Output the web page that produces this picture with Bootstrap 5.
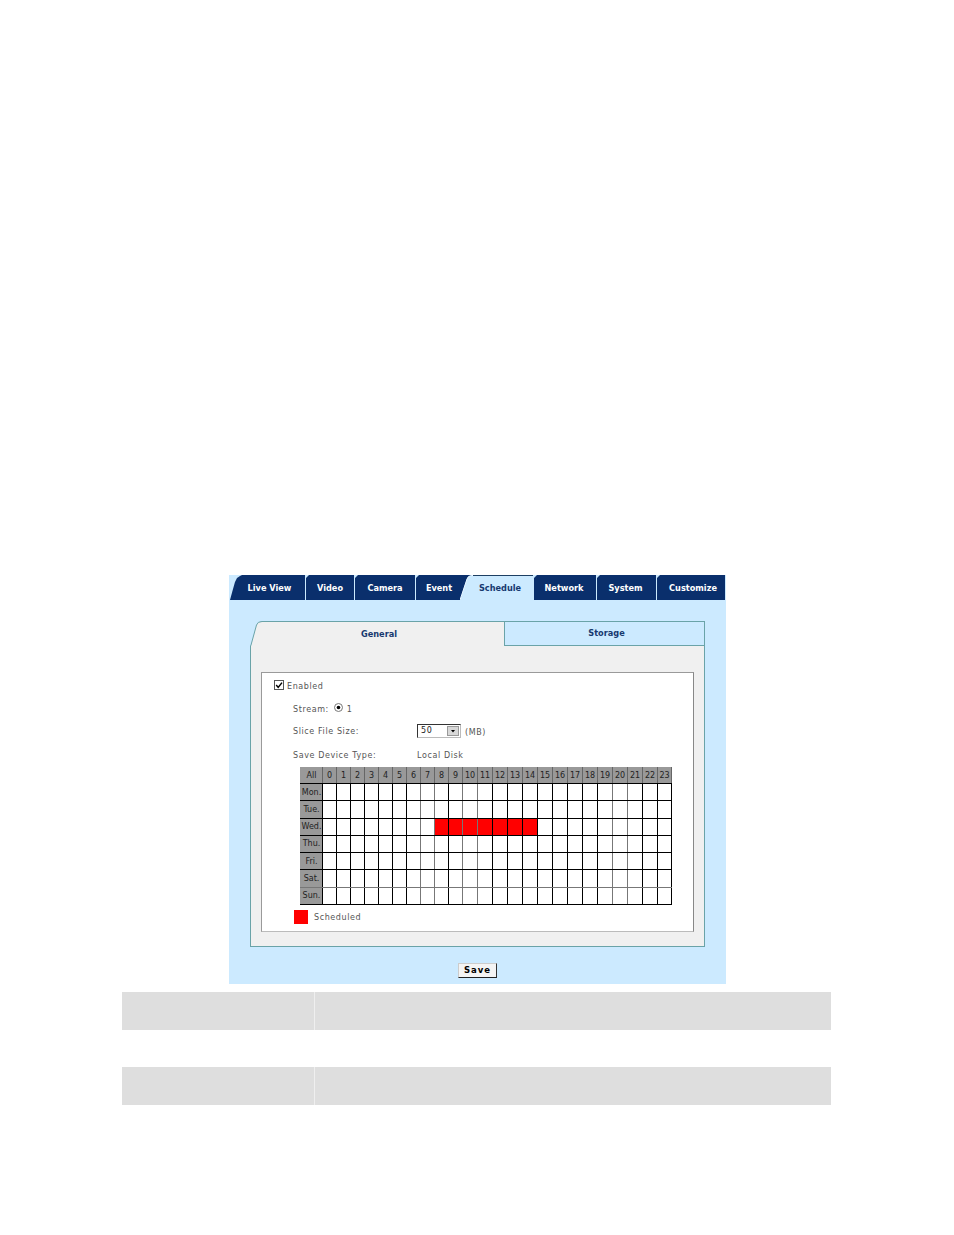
<!DOCTYPE html>
<html lang="en">
<head>
<meta charset="utf-8">
<title>Schedule</title>
<link rel="stylesheet" href="https://cdn.jsdelivr.net/npm/bootstrap@5.3.0/dist/css/bootstrap.min.css">
<style>
body{background:#fff;font-family:"DejaVu Sans",Verdana,sans-serif;font-size:8px;color:#555;}
.page-wrap{padding-top:575px;}
.shot{width:497px;margin-left:229px;background:#cceaff;padding-bottom:6px;}
.top-tabs{height:25px;padding-left:1px;gap:1px;background:#cceaff;}
.top-tab{position:relative;height:25px;padding-top:1px;background:#0a2f6c;color:#fff;font-weight:700;font-size:8.2px;clip-path:polygon(3px 0,100% 0,100% 100%,0 100%,0 3px);}
.top-tab.first{clip-path:polygon(12px 0,10px 1px,7px 3px,5px 7px,3px 14px,0 25px,100% 100%,100% 0);}
.top-tab.current{background:#cceaff;color:#17396f;clip-path:none;overflow:visible;border-top:1px solid #1d3f63;padding-top:0;}
.nudge-l{padding-right:2px;}
.slope{position:absolute;left:0;top:-1px;}
.slope-tab{left:-3px;}
.inner{margin:21px 21px 0;width:455px;}
.in-tabs{height:25px;}
.in-tab{position:relative;height:25px;font-weight:700;font-size:8.2px;color:#17396f;}
.in-tab.on{width:254px;background:#f0f0f0;border-top:1px solid #6aa3a8;}
.in-tab.off{width:201px;background:#cceaff;border:1px solid #6aa3a8;}
.in-body{background:#f0f0f0;border:1px solid #6aa3a8;border-top:0;padding:26px 10px 15px;height:301px;}
.form-box{background:#fff;border:1px solid #9a9a9a;border-bottom-color:#bbb;border-right-color:#888;height:260px;padding-top:5px;letter-spacing:.6px;}
.line{height:14px;margin-left:31px;}
.gap-a{margin-top:9px;}
.gap-b{margin-top:10px;}
.lbl{width:124px;}
.drop1{padding-top:2px;}
.drop2{padding-top:4px;}
.chk-row{margin-left:12px;height:14px;}
.chk{width:10px;height:10px;margin-right:3px;display:block;}
.radio-ic{display:block;width:9px;height:9px;margin:-2px 4px 0 5px;}
.fake-select{width:44px;height:14px;border:1px solid #333;border-right-color:#bbb;border-bottom-color:#bbb;color:#222;padding-left:3px;margin-right:4px;background:#fff;}
.sel-btn{width:12px;height:10px;background:#d8d8d8;border:1px solid #999;margin-right:1px;}
.sched{table-layout:fixed;width:371px;height:138px;margin:5px 0 0 38px;border-collapse:collapse;letter-spacing:0;color:#222;}
.sched th{background:#999;font-weight:400;text-align:center;padding:0;border:1px solid #222;font-size:8px;line-height:1;}
.sched thead th{border-top-color:#999;border-left-color:#666;border-right-color:#666;border-bottom-color:#000;height:16px;width:15px;}
.sched thead th:nth-child(-n+11),.sched thead th:last-child{width:14px;}
.sched thead th:first-child{border-left-color:#999;width:22px;}
.sched tbody th{border-color:#999 #000 #000 #999;padding-top:1px;}
.sched tbody tr:nth-child(6) th{border-bottom-color:#777;}
.sched td{padding:0;border:1px solid #000;background:#fff;}
.sched tr:nth-child(6) td{border-bottom-color:#777;}
.sched td:nth-child(8),.sched td:nth-child(9),.sched td:nth-child(11),.sched td:nth-child(12),.sched td:nth-child(21),.sched td:nth-child(22){border-right-color:#777;}
.sched td.hit{background:#f00;}
.legend{margin:5px 0 0 32px;height:14px;}
.swatch{width:14px;height:14px;background:#f00;margin-right:6px;}
.save-btn{width:39px;height:15px;padding:0;font-size:8.5px;line-height:1;font-weight:700;letter-spacing:1px;color:#000;background:#f4f4f4;border:1px solid;border-color:#ccc #333 #222 #ccc;border-radius:0;}
.save-row{margin-top:16px;}
.blank{width:709px;margin:8px 0 0 122px;border-collapse:collapse;table-layout:fixed;}
.blank td{height:38px;padding:0;}
.blank .gap-row td{height:37px;}
.blank .fill td{background:#dedede;}
.blank .fill td:first-child{width:192px;border-right:1px solid #efefef;}
</style>
</head>
<body class="m-0">
<div class="page-wrap">
<div class="shot">
  <nav class="top-tabs d-flex">
    <div class="top-tab first d-flex align-items-center justify-content-center ps-1" style="width:75px">Live View</div>
    <div class="top-tab d-flex align-items-center justify-content-center" style="width:48px">Video</div>
    <div class="top-tab d-flex align-items-center justify-content-center" style="width:60px">Camera</div>
    <div class="top-tab d-flex align-items-center justify-content-center" style="width:46px">Event</div>
    <div class="top-tab current d-flex align-items-center justify-content-center ps-1" style="width:70px">
      <svg class="slope slope-tab" width="13" height="25" viewBox="0 0 13 25"><path d="M0 25 L7 4 Q8 .5 12 .5 L13 0 L0 0Z" fill="#0a2f6c"/><path d="M0 25 L7 4 Q8 .5 12 .5 L13 1 L13 25Z" fill="#cceaff"/><path d="M0 25 L7 4 Q8 .5 12 .5 L13 .5" fill="none" stroke="#e4f4ff"/></svg>
      Schedule</div>
    <div class="top-tab nudge-l d-flex align-items-center justify-content-center" style="width:62px">Network</div>
    <div class="top-tab nudge-l d-flex align-items-center justify-content-center" style="width:59px">System</div>
    <div class="top-tab d-flex align-items-center justify-content-center ps-1" style="width:68px">Customize</div>
  </nav>
  <div class="inner">
    <div class="in-tabs d-flex">
      <div class="in-tab on d-flex align-items-center justify-content-center ps-1">
        <svg class="slope" width="13" height="25" viewBox="0 0 13 25"><path d="M0 0 L0 25 L1 25 L6.5 4 Q7.5 .5 12 .5 L13 .5 L13 0Z" fill="#cceaff"/><path d="M.5 25 L1 24 L6.5 4 Q7.5 .5 12 .5 L13 .5" fill="none" stroke="#6aa3a8"/></svg>
        General</div>
      <div class="in-tab off d-flex align-items-center justify-content-center ps-1">Storage</div>
    </div>
    <div class="in-body">
      <div class="form-box">
        <div class="chk-row d-flex align-items-center">
          <svg class="chk" viewBox="0 0 10 10"><rect x=".5" y=".5" width="9" height="9" fill="#fff" stroke="#555"/><path d="M2.2 5 L4.2 7.4 L8 2.6" fill="none" stroke="#000" stroke-width="1.5"/></svg>
          <span class="drop2">Enabled</span>
        </div>
        <div class="line gap-a d-flex align-items-center">
          <span class="drop2">Stream:</span>
          <svg class="radio-ic" viewBox="0 0 9 9"><circle cx="4.5" cy="4.5" r="4" fill="#fff" stroke="#777"/><circle cx="4.5" cy="4.5" r="1.8" fill="#000"/></svg>
          <span class="drop2">1</span>
        </div>
        <div class="line gap-a d-flex align-items-center">
          <span class="lbl drop1">Slice File Size:</span>
          <span class="fake-select d-flex align-items-center justify-content-between"><span>50</span><span class="sel-btn d-flex align-items-center justify-content-center"><svg width="6" height="4" viewBox="0 0 6 4"><path d="M1 1h4L3 3.4Z" fill="#000"/></svg></span></span>
          <span class="drop2">(MB)</span>
        </div>
        <div class="line gap-b d-flex align-items-center">
          <span class="lbl drop1">Save Device Type:</span>
          <span class="drop1">Local Disk</span>
        </div>
        <table class="sched">
          <thead><tr><th>All</th><th>0</th><th>1</th><th>2</th><th>3</th><th>4</th><th>5</th><th>6</th><th>7</th><th>8</th><th>9</th><th>10</th><th>11</th><th>12</th><th>13</th><th>14</th><th>15</th><th>16</th><th>17</th><th>18</th><th>19</th><th>20</th><th>21</th><th>22</th><th>23</th></tr></thead>
          <tbody>
            <tr><th>Mon.</th><td></td><td></td><td></td><td></td><td></td><td></td><td></td><td></td><td></td><td></td><td></td><td></td><td></td><td></td><td></td><td></td><td></td><td></td><td></td><td></td><td></td><td></td><td></td><td></td></tr>
            <tr><th>Tue.</th><td></td><td></td><td></td><td></td><td></td><td></td><td></td><td></td><td></td><td></td><td></td><td></td><td></td><td></td><td></td><td></td><td></td><td></td><td></td><td></td><td></td><td></td><td></td><td></td></tr>
            <tr><th>Wed.</th><td></td><td></td><td></td><td></td><td></td><td></td><td></td><td></td><td class="hit"></td><td class="hit"></td><td class="hit"></td><td class="hit"></td><td class="hit"></td><td class="hit"></td><td class="hit"></td><td></td><td></td><td></td><td></td><td></td><td></td><td></td><td></td><td></td></tr>
            <tr><th>Thu.</th><td></td><td></td><td></td><td></td><td></td><td></td><td></td><td></td><td></td><td></td><td></td><td></td><td></td><td></td><td></td><td></td><td></td><td></td><td></td><td></td><td></td><td></td><td></td><td></td></tr>
            <tr><th>Fri.</th><td></td><td></td><td></td><td></td><td></td><td></td><td></td><td></td><td></td><td></td><td></td><td></td><td></td><td></td><td></td><td></td><td></td><td></td><td></td><td></td><td></td><td></td><td></td><td></td></tr>
            <tr><th>Sat.</th><td></td><td></td><td></td><td></td><td></td><td></td><td></td><td></td><td></td><td></td><td></td><td></td><td></td><td></td><td></td><td></td><td></td><td></td><td></td><td></td><td></td><td></td><td></td><td></td></tr>
            <tr><th>Sun.</th><td></td><td></td><td></td><td></td><td></td><td></td><td></td><td></td><td></td><td></td><td></td><td></td><td></td><td></td><td></td><td></td><td></td><td></td><td></td><td></td><td></td><td></td><td></td><td></td></tr>
          </tbody>
        </table>
        <div class="legend d-flex align-items-center"><span class="swatch"></span><span class="drop1">Scheduled</span></div>
      </div>
    </div>
  </div>
  <div class="save-row d-flex justify-content-center"><button type="button" class="btn save-btn">Save</button></div>
</div>
<table class="blank">
  <tbody>
    <tr class="fill"><td></td><td></td></tr>
    <tr class="gap-row"><td></td><td></td></tr>
    <tr class="fill"><td></td><td></td></tr>
  </tbody>
</table>
</div>
<script src="https://cdn.jsdelivr.net/npm/bootstrap@5.3.0/dist/js/bootstrap.bundle.min.js"></script>
</body>
</html>
